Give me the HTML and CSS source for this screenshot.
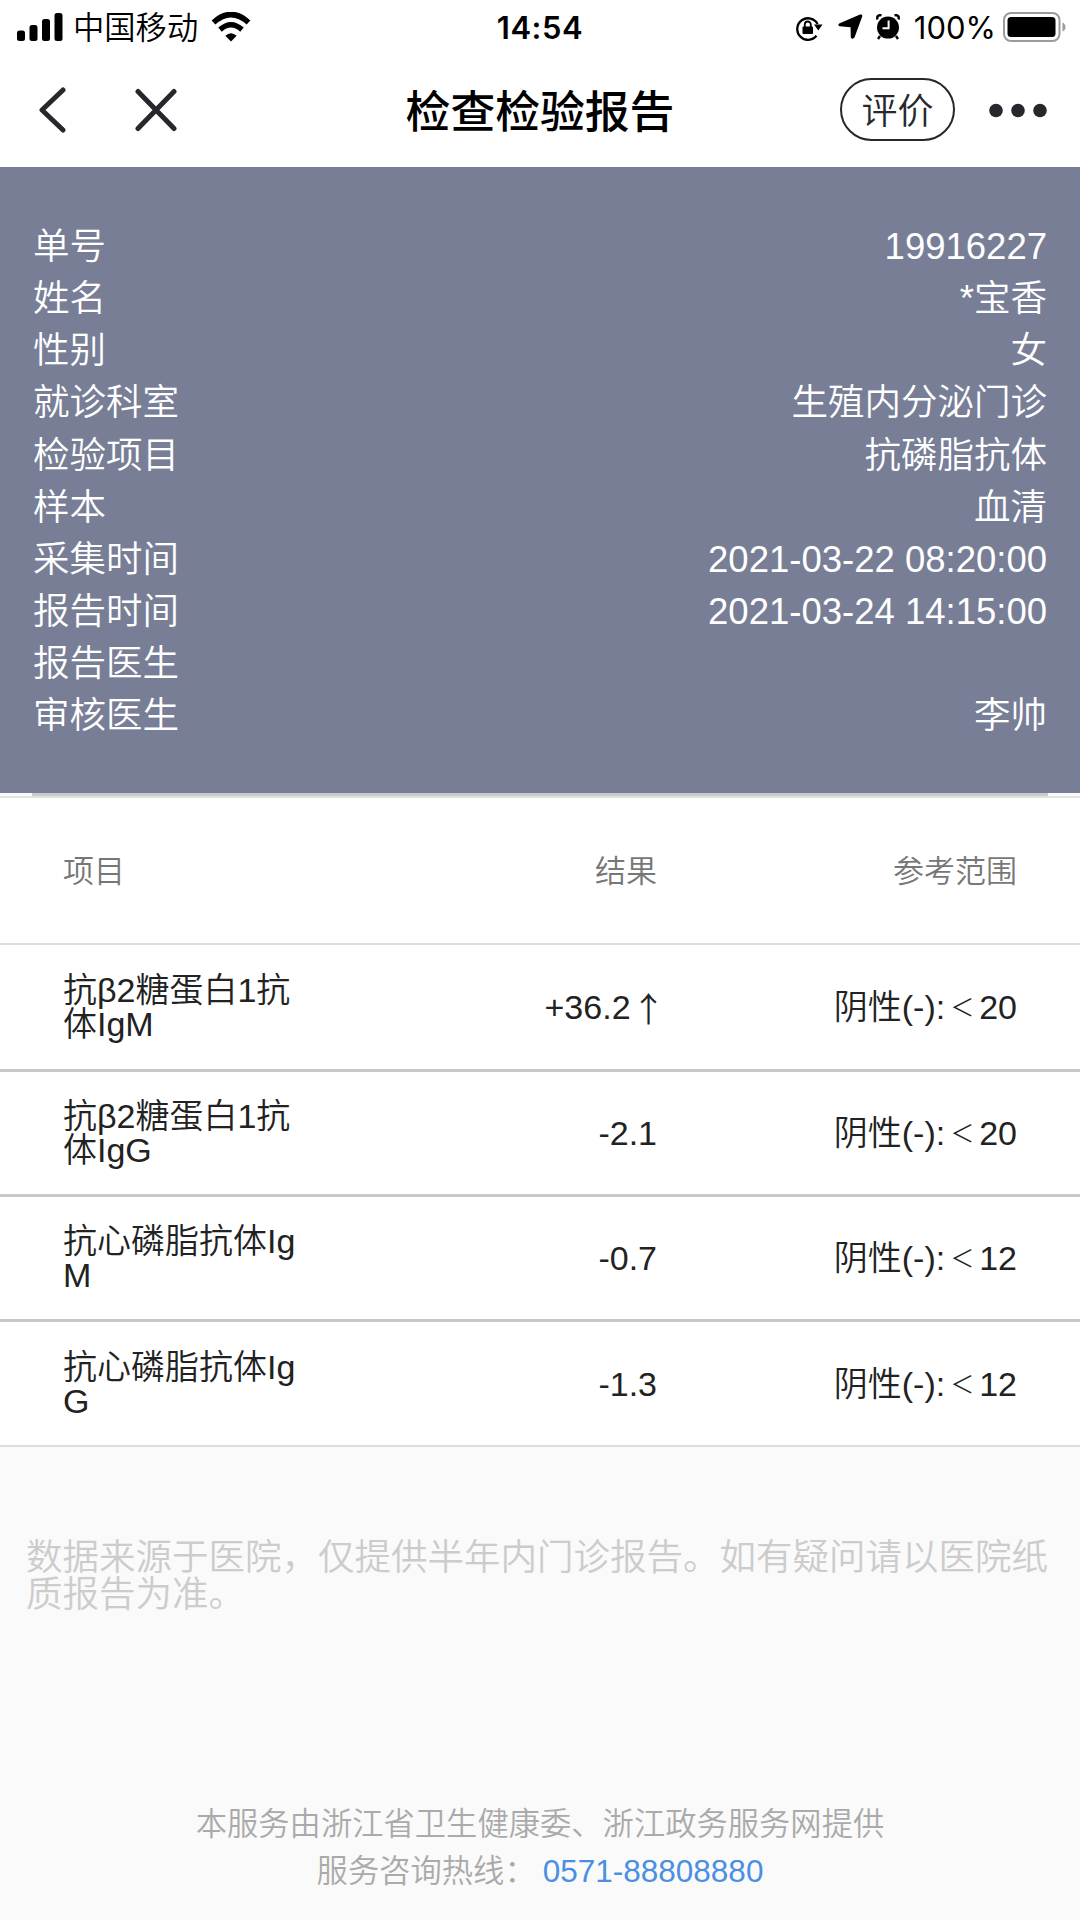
FILE: index.html
```html
<!DOCTYPE html>
<html lang="zh-CN">
<head>
    <meta charset="UTF-8">
    <meta name="viewport" content="width=device-width, initial-scale=1.0">
    <title>检查检验报告</title>
    <link rel="stylesheet" href="styles.css">
</head>
<body>
    <div class="status-bar">
        <div class="status-left">
            <svg class="signal" width="46" height="28" viewBox="0 0 46 28">
                <rect x="0" y="17.5" width="8" height="10.5" rx="2.5"/>
                <rect x="12.5" y="12" width="8" height="16" rx="2.5"/>
                <rect x="25" y="6" width="8" height="22" rx="2.5"/>
                <rect x="37.5" y="0" width="8" height="28" rx="2.5"/>
            </svg>
            <span class="carrier">中国移动</span>
            <svg class="wifi" width="40" height="30" viewBox="0 0 40 30">
                <path d="M2.5 10.5 Q20 -5.5 37.5 10.5" fill="none" stroke="#000" stroke-width="5.6"/>
                <path d="M9 17.6 Q20 8 31 17.6" fill="none" stroke="#000" stroke-width="5.4"/>
                <path d="M20 29.5 L14.3 23.7 Q20 18.6 25.7 23.7 Z"/>
            </svg>
        </div>
        <span class="time">14:54</span>
        <div class="status-right">
            <svg class="lock" width="28" height="26" viewBox="0 0 28 26">
                <path d="M21.5 20.8 A10.8 10.8 0 1 1 22.6 9" fill="none" stroke="#000" stroke-width="2.3"/>
                <path d="M19 9.5 H27.5 L23.3 15.5 Z"/>
                <rect x="7.5" y="11.5" width="10.5" height="7.5" rx="1"/>
                <path d="M9.8 12 V9.5 A3 3 0 0 1 15.8 9.5 V12" fill="none" stroke="#000" stroke-width="1.8"/>
            </svg>
            <svg class="location" width="25" height="26" viewBox="0 0 25 26">
                <path d="M22 .6 Q24.8 0 24.2 2.6 L16.5 23.6 Q14.6 26 12.8 23.4 L12.6 13.2 L1.5 12.2 Q-.8 11 1.2 9.6 Z"/>
            </svg>
            <svg class="alarm" width="24" height="26" viewBox="0 0 24 26">
                <circle cx="12" cy="13.6" r="11"/>
                <path d="M1.6 5.5 Q0 1 5.5 1 M22.4 5.5 Q24 1 18.5 1 M4 22 L2 25 M20 22 L22 25" fill="none" stroke="#000" stroke-width="2.4"/>
                <path d="M12.6 6.5 V14.2 H6.5" fill="none" stroke="#fff" stroke-width="2"/>
            </svg>
            <span class="percent">100%</span>
            <svg class="battery" width="63" height="30" viewBox="0 0 63 30">
                <rect x="1" y="1" width="55.5" height="28" rx="7" fill="none" stroke="#9b9b9b" stroke-width="2"/>
                <rect x="4.5" y="5" width="48" height="20" rx="3.5"/>
                <path d="M59.5 10.5 Q62.5 12 62.5 15 Q62.5 18 59.5 19.5 Z" fill="#9b9b9b"/>
            </svg>
        </div>
    </div>

    <div class="nav-bar">
        <div class="nav-left">
            <svg width="30" height="46" viewBox="0 0 30 46">
                <path d="M26 3 L5 23 L26 43"/>
            </svg>
            <svg width="44" height="44" viewBox="0 0 44 44">
                <path d="M4 3.5 L40 40.5 M40 3.5 L4 40.5"/>
            </svg>
        </div>
        <h1 class="title">检查检验报告</h1>
        <div class="nav-right">
            <button class="rate">评价</button>
            <svg width="60" height="16" viewBox="0 0 60 16">
                <circle cx="8" cy="8.5" r="6.8"/>
                <circle cx="30" cy="8.5" r="6.8"/>
                <circle cx="52" cy="8.5" r="6.8"/>
            </svg>
        </div>
    </div>

    <div class="info">
        <div class="info-row"><span>单号</span><span>19916227</span></div>
        <div class="info-row"><span>姓名</span><span>*宝香</span></div>
        <div class="info-row"><span>性别</span><span>女</span></div>
        <div class="info-row"><span>就诊科室</span><span>生殖内分泌门诊</span></div>
        <div class="info-row"><span>检验项目</span><span>抗磷脂抗体</span></div>
        <div class="info-row"><span>样本</span><span>血清</span></div>
        <div class="info-row"><span>采集时间</span><span>2021-03-22 08:20:00</span></div>
        <div class="info-row"><span>报告时间</span><span>2021-03-24 14:15:00</span></div>
        <div class="info-row"><span>报告医生</span><span></span></div>
        <div class="info-row"><span>审核医生</span><span>李帅</span></div>
    </div>
    <div class="divider"></div>

    <div class="results">
        <div class="row head">
            <span>项目</span>
            <span>结果</span>
            <span>参考范围</span>
        </div>
        <div class="row first">
            <span>抗β2糖蛋白1抗<br>体IgM</span>
            <span>+36.2 <i class="arrow">↑</i></span>
            <span>阴性(-):<i class="less">＜</i>20</span>
        </div>
        <div class="row">
            <span>抗β2糖蛋白1抗<br>体IgG</span>
            <span>-2.1</span>
            <span>阴性(-):<i class="less">＜</i>20</span>
        </div>
        <div class="row">
            <span>抗心磷脂抗体Ig<br>M</span>
            <span>-0.7</span>
            <span>阴性(-):<i class="less">＜</i>12</span>
        </div>
        <div class="row">
            <span>抗心磷脂抗体Ig<br>G</span>
            <span>-1.3</span>
            <span>阴性(-):<i class="less">＜</i>12</span>
        </div>
    </div>

    <p class="note">数据来源于医院，仅提供半年内门诊报告。如有疑问请以医院纸<br>质报告为准。</p>

    <div class="footer">
        <div>本服务由浙江省卫生健康委、浙江政务服务网提供</div>
        <div>服务咨询热线：<a class="phone" href="tel:0571-88808880">0571-88808880</a></div>
    </div>
</body>
</html>
```
FILE: styles.css
```css
* {
    box-sizing: border-box;
}
body {
    margin: 0;
    width: 1080px;
    height: 1920px;
    overflow: hidden;
    display: flex;
    flex-direction: column;
    background-color: #fafafa;
    font-family: "Liberation Sans", "Noto Sans CJK SC", sans-serif;
    font-weight: 350;
}
svg {
    display: block;
    flex: none;
}
.status-bar {
    height: 53px;
    padding: 0 14px 0 17px;
    display: grid;
    grid-template-columns: 1fr auto 1fr;
    align-items: center;
    background-color: #fff;
    color: #000;
    font-family: Inter, "Noto Sans CJK SC", sans-serif;
}
.status-left, .status-right {
    display: flex;
    align-items: center;
}
.status-right {
    justify-content: flex-end;
}
.carrier {
    margin: 0 13px 0 10px;
    padding-top: 3px;
    font-size: 31.3px;
    line-height: 50px;
}
.time {
    margin-right: 3px;
    padding-top: 3px;
    font-size: 31px;
    font-weight: 600;
    letter-spacing: 0.5px;
    line-height: 50px;
}
.lock { margin-top: 2px; }
.location { margin-left: 15px; }
.alarm { margin-left: 13px; }
.percent {
    margin: 0 7px 0 14px;
    padding-top: 3px;
    font-size: 31px;
    font-weight: 400;
    line-height: 50px;
}
.nav-bar {
    height: 114px;
    padding: 0 32px 1px 37px;
    display: grid;
    grid-template-columns: 1fr auto 1fr;
    align-items: center;
    background-color: #fff;
}
.nav-left, .nav-right {
    display: flex;
    align-items: center;
}
.nav-left {
    gap: 67px;
    fill: none;
    stroke: #26282d;
    stroke-width: 5;
    stroke-linecap: round;
    stroke-linejoin: round;
}
.nav-right {
    justify-content: flex-end;
    gap: 33px;
    fill: #26282d;
}
.title {
    margin: 0;
    padding: 4px 5px 0 0;
    font-size: 44.8px;
    font-weight: 500;
    line-height: 60px;
    color: #000;
}
.rate {
    width: 115px;
    height: 63px;
    padding: 0 0 3px;
    border: 2px solid #26282d;
    border-radius: 32px;
    background-color: #fff;
    color: #26282d;
    font-family: inherit;
    font-size: 36px;
    font-weight: 350;
}
.info {
    height: 626px;
    padding: 54px 33px 0;
    background-color: #777e96;
    color: #fff;
}
.info-row {
    height: 52.17px;
    display: flex;
    justify-content: space-between;
    font-size: 36.5px;
    line-height: 52.17px;
}
.divider {
    height: 5px;
    border-bottom: 2px solid #e2e2e2;
    background: linear-gradient(#cbcbcb, #cbcbcb) center / 1016px 3px no-repeat #fafafa;
}
.results {
    background-color: #fff;
    color: #222;
    font-size: 34px;
    line-height: 34px;
}
.row {
    height: 125px;
    padding: 0 63px;
    display: grid;
    grid-template-columns: 260px 334px 1fr;
    align-items: center;
    border-bottom: 3px solid #c8c8c8;
}
.row:last-child {
    border-bottom: 2px solid #ddd;
}
.row span + span {
    text-align: right;
}
.head {
    height: 147px;
    padding-top: 2px;
    border-bottom: 2px solid #ddd;
    color: #777;
    font-size: 31px;
}
.first {
    height: 127px;
}
.arrow, .less {
    display: inline-block;
    font-style: normal;
    font-family: "Noto Sans CJK SC", sans-serif;
}
/* pull in the blank sides of the full-width arrow */
.arrow {
    margin: 0 -8.5px;
    line-height: 30px;
    vertical-align: -3px;
}
/* small full-width sign, raised to the middle of the digits */
.less {
    width: 34px;
    font-size: 24px;
    line-height: 24px;
    text-align: center;
    vertical-align: 3px;
}
.note {
    margin: 93px 26px 0;
    font-size: 36.5px;
    line-height: 36.5px;
    white-space: nowrap;
    color: #ccc;
}
.footer {
    margin-top: 188px;
    text-align: center;
    font-size: 31.3px;
    line-height: 47px;
    color: #aaa;
}
.phone {
    margin-left: 7px;
    font-size: 31.5px;
    color: #4a8fe2;
    text-decoration: none;
}
```
